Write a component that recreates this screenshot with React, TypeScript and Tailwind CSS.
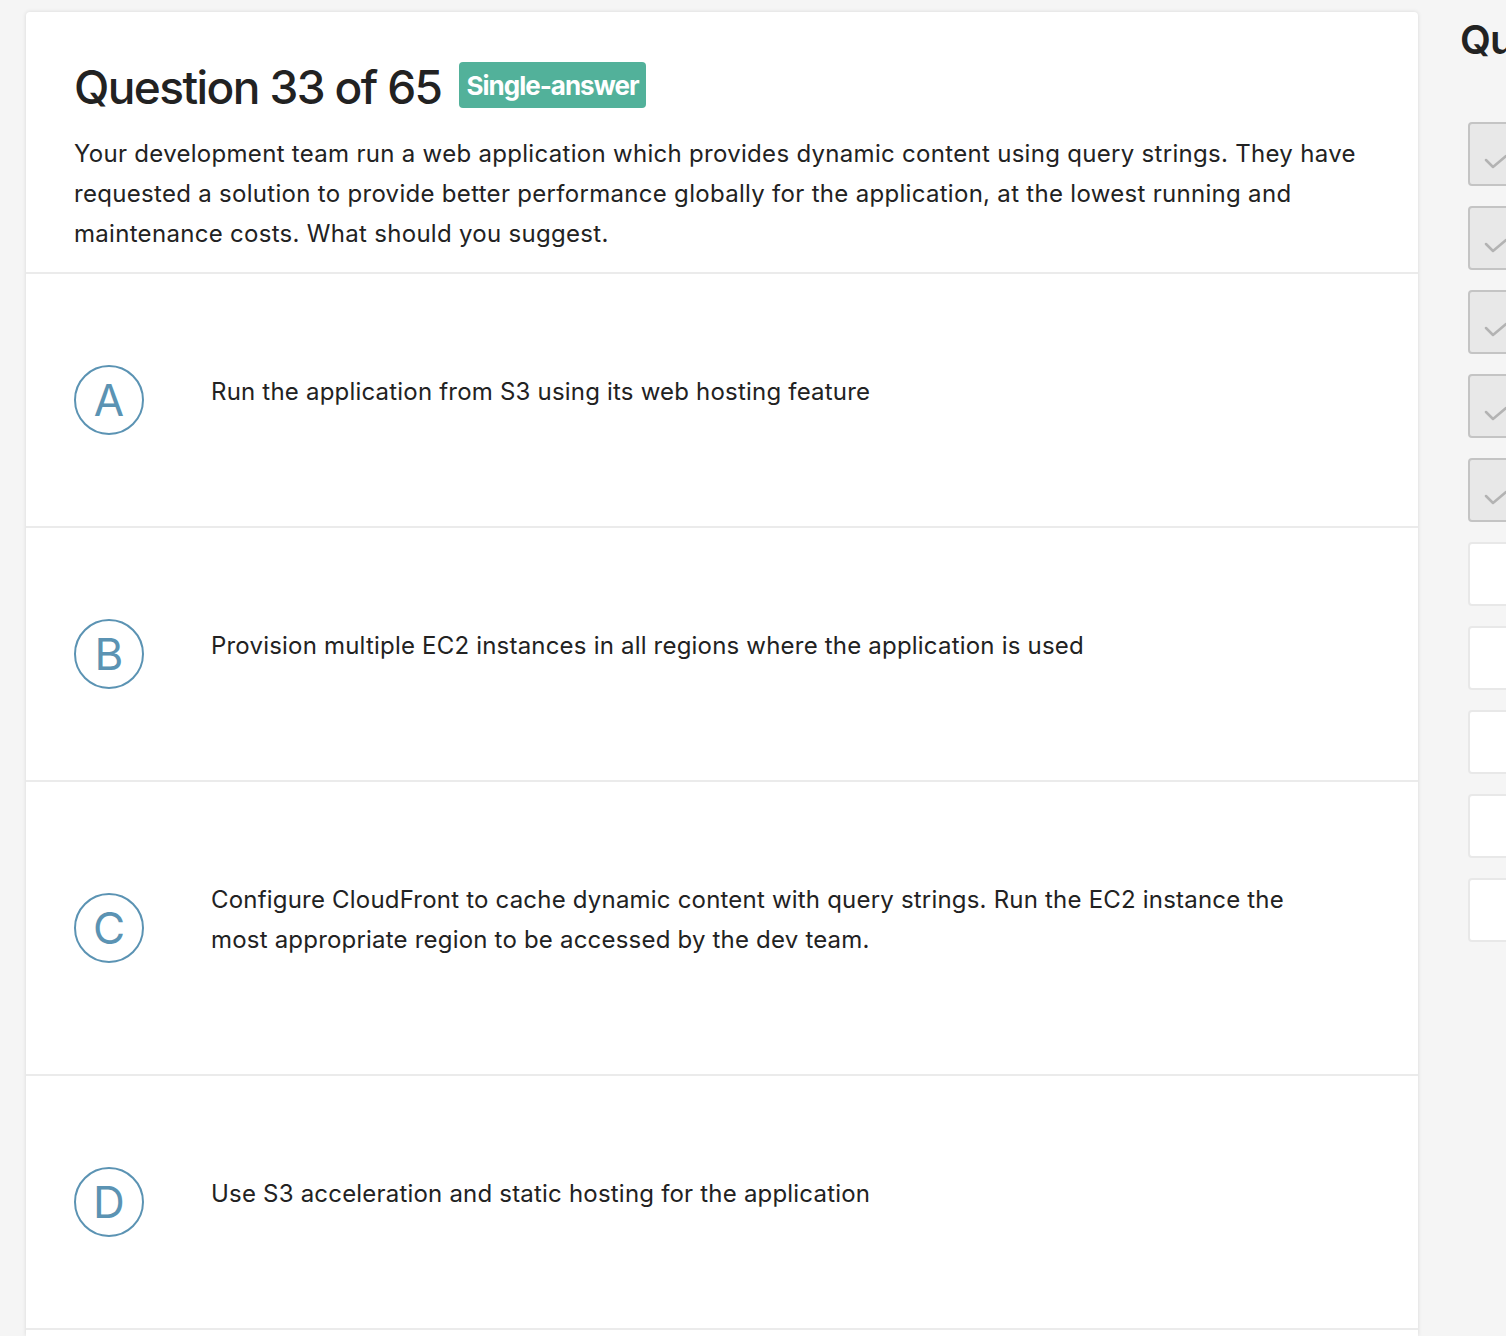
import React from 'react';

type Option = {
  key: string;
  text: string;
};

const options: Option[] = [
  { key: 'A', text: 'Run the application from S3 using its web hosting feature' },
  { key: 'B', text: 'Provision multiple EC2 instances in all regions where the application is used' },
  {
    key: 'C',
    text: 'Configure CloudFront to cache dynamic content with query strings. Run the EC2 instance the most appropriate region to be accessed by the dev team.',
  },
  { key: 'D', text: 'Use S3 acceleration and static hosting for the application' },
];

// first five answered, rest pending
const progress = [true, true, true, true, true, false, false, false, false, false];

const CheckIcon = () => (
  <svg viewBox="0 0 24 16" className="w-[24px] h-[16px]" fill="none">
    <path d="M2 6 L9 13 L22 2" stroke="#b3b3b3" strokeWidth="2.5" strokeLinecap="round" strokeLinejoin="round" />
  </svg>
);

const OptionRow: React.FC<{ option: Option }> = ({ option }) => (
  <div className="flex items-center border-b-2 border-[#ebebeb] py-[91px] pl-[48px] pr-[100px]">
    <div className="w-[70px] h-[70px] shrink-0 rounded-full border-2 border-[#5b93b3] flex items-center justify-center text-[44px] leading-none text-[#5b93b3] font-normal">
      {option.key}
    </div>
    <p className="ml-[67px] pt-[7px] pb-[23px] text-[24px] leading-[40px] tracking-[0.2px] text-[#222]">
      {option.text}
    </p>
  </div>
);

export default function App() {
  return (
    <div
      className="h-[1336px] overflow-hidden bg-[#f5f5f5] flex gap-[42px] pl-[26px] pt-[12px]"
      style={{ fontFamily: 'Inter, "Open Sans", sans-serif' }}
    >
      {/* Question card */}
      <div className="w-[1392px] shrink-0 bg-white rounded-t-[4px] shadow-[0_0_4px_rgba(0,0,0,0.12)]">
        <div className="border-b-2 border-[#ebebeb] pl-[48px] pr-[40px] pt-[50px] pb-[18px]">
          <div className="flex items-center gap-[18px]">
            <h1 className="text-[46px] leading-[50px] font-medium tracking-[-1.6px] text-[#222]">
              Question 33 of 65
            </h1>
            <span className="mt-[-4px] bg-[#52b19a] text-white rounded-[4px] px-[7px] h-[46px] flex items-center text-[26px] font-bold tracking-[-1px]">
              Single-answer
            </span>
          </div>
          <p className="mt-[22px] text-[24px] leading-[40px] tracking-[0.3px] text-[#222]">
            Your development team run a web application which provides dynamic content using query strings. They have
            requested a solution to provide better performance globally for the application, at the lowest running and
            maintenance costs. What should you suggest.
          </p>
        </div>

        {options.map((o) => (
          <OptionRow key={o.key} option={o} />
        ))}
      </div>

      {/* Progress sidebar */}
      <div className="flex-1 min-w-0 overflow-hidden">
        <h2 className="text-[40px] leading-[56px] font-semibold text-[#222] tracking-[-1px] whitespace-nowrap">
          Questions
        </h2>
        <div className="mt-[54px] ml-[8px] flex flex-col gap-[20px]">
          {progress.map((done, i) =>
            done ? (
              <div
                key={i}
                className="w-[80px] h-[64px] rounded-[4px] border-2 border-[#c4c4c4] bg-[#e8e8e8] flex items-end pb-[14px] pl-[14px]"
              >
                <CheckIcon />
              </div>
            ) : (
              <div key={i} className="w-[80px] h-[64px] rounded-[4px] border-2 border-[#e8e8e8] bg-white" />
            ),
          )}
        </div>
      </div>
    </div>
  );
}
